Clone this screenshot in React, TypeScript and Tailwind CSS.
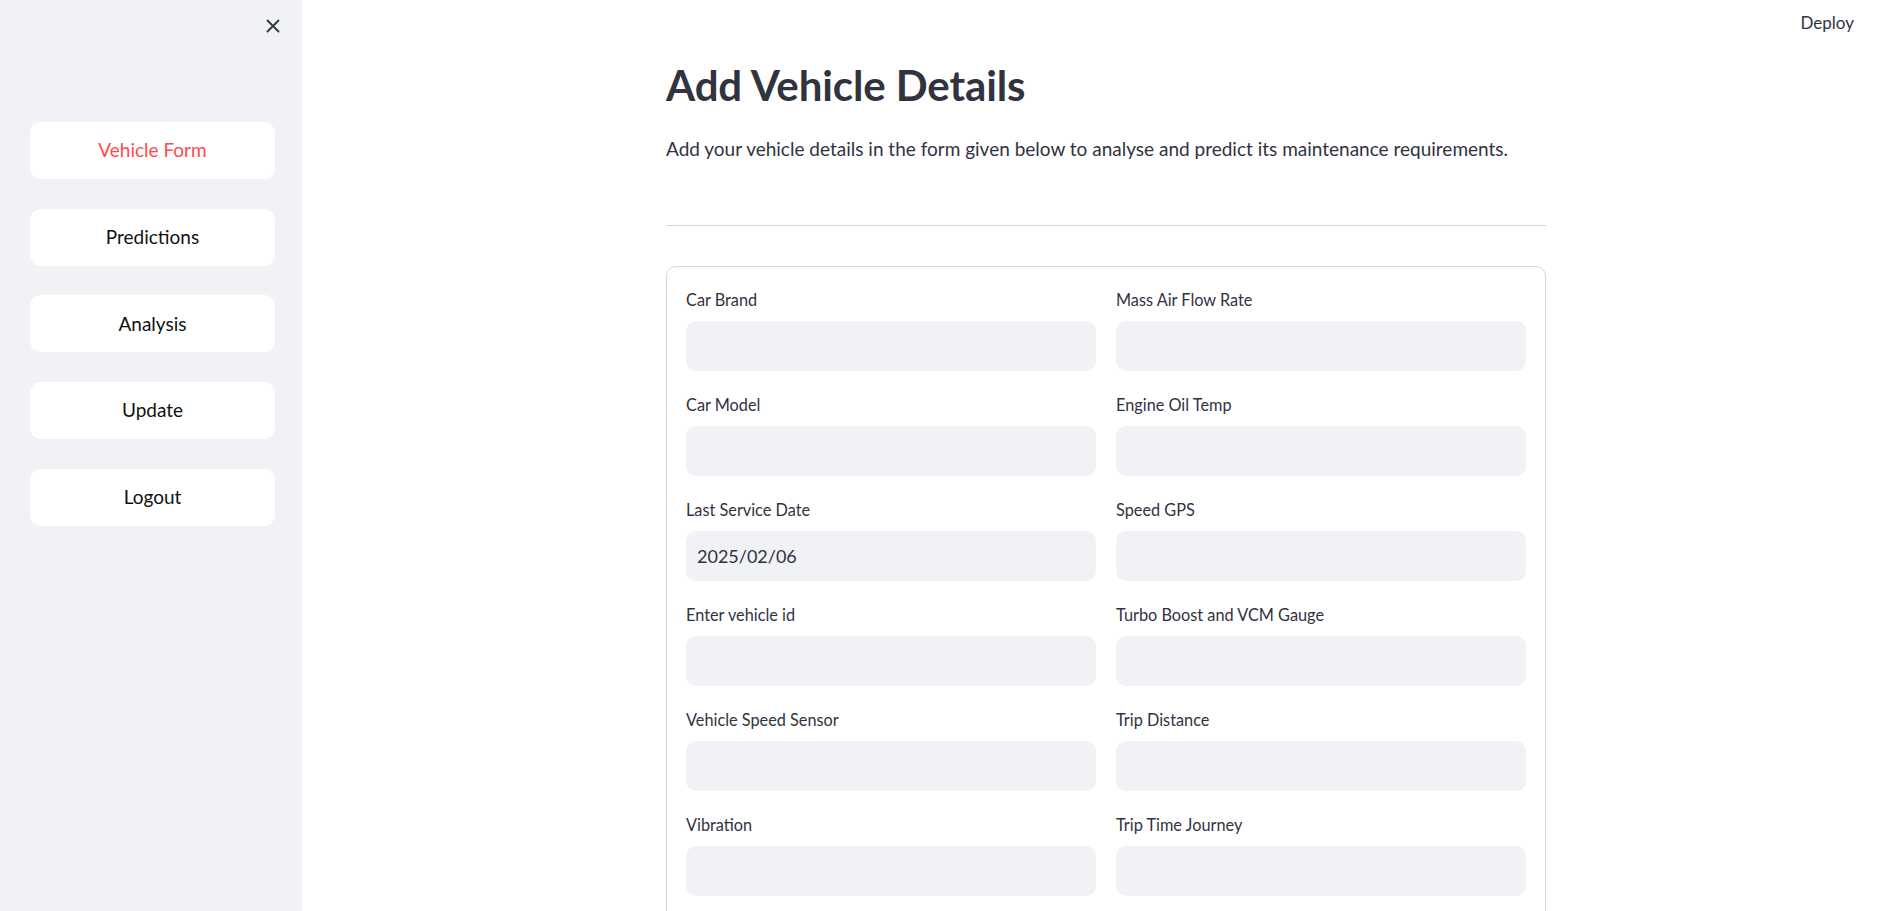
import React from "react";

const leftFields = [
  { label: "Car Brand", value: "" },
  { label: "Car Model", value: "" },
  { label: "Last Service Date", value: "2025/02/06" },
  { label: "Enter vehicle id", value: "" },
  { label: "Vehicle Speed Sensor", value: "" },
  { label: "Vibration", value: "" },
];

const rightFields = [
  "Mass Air Flow Rate",
  "Engine Oil Temp",
  "Speed GPS",
  "Turbo Boost and VCM Gauge",
  "Trip Distance",
  "Trip Time Journey",
];

const navItems = ["Vehicle Form", "Predictions", "Analysis", "Update", "Logout"];

function Field({ label, value }: { label: string; value?: string }) {
  return (
    <div className="flex flex-col">
      <div className="h-[30px] text-[16.3px] leading-[27px] text-[#31333f]">{label}</div>
      <div className="mt-[5px] flex h-[50px] items-center rounded-[10px] bg-[#f0f2f6] pl-[11px] text-[18px] text-[#31333f]">
        {value}
      </div>
    </div>
  );
}

export default function App() {
  const rows = leftFields.map((f, i) => ({ left: f, right: rightFields[i] }));
  return (
    <div className="flex h-screen w-full overflow-hidden bg-white font-['Lato',sans-serif] text-[#31333f]">
      <aside className="flex w-[302px] shrink-0 flex-col bg-[#f0f2f6]">
        <div className="flex h-[52px] items-center justify-end pr-[22px]">
          <svg width="14" height="14" viewBox="0 0 14 14" fill="none">
            <path d="M1.5 1.5 L12.5 12.5 M12.5 1.5 L1.5 12.5" stroke="#31333f" strokeWidth="1.8" strokeLinecap="round" />
          </svg>
        </div>
        <nav className="flex flex-col gap-[29.7px] px-[30px] pt-[70px]">
          {navItems.map((item, i) => (
            <button
              key={item}
              className={
                "flex h-[57px] w-[245px] items-center justify-center rounded-[11px] bg-white text-[19px] " +
                (i === 0 ? "text-[#ff4b4b]" : "text-[#111111]")
              }
            >
              {item}
            </button>
          ))}
        </nav>
      </aside>
      <main className="relative flex-1 overflow-hidden">
        <div className="absolute right-[32px] top-[13px] text-[17px] leading-[20px] text-[#31333f]">Deploy</div>
        <div className="ml-[364px] w-[880px] pt-[60px]">
          <h2 className="text-[42px] font-bold leading-[50px] tracking-[-0.1px] text-[#31333f]">Add Vehicle Details</h2>
          <p className="mt-[27px] text-[19px] leading-[23px] text-[#31333f]">
            Add your vehicle details in the form given below to analyse and predict its maintenance requirements.
          </p>
          <div className="mt-[65px] h-px w-full bg-[#d6d6d9]" />
          <div className="mt-[40px] rounded-[10px] border border-[#d6d6d9] p-[19px] pb-[60px]">
            <div className="grid grid-cols-2 gap-x-[20px] gap-y-[20px]">
              {rows.map((r) => (
                <React.Fragment key={r.left.label}>
                  <Field label={r.left.label} value={r.left.value} />
                  <Field label={r.right} />
                </React.Fragment>
              ))}
            </div>
          </div>
        </div>
      </main>
    </div>
  );
}
